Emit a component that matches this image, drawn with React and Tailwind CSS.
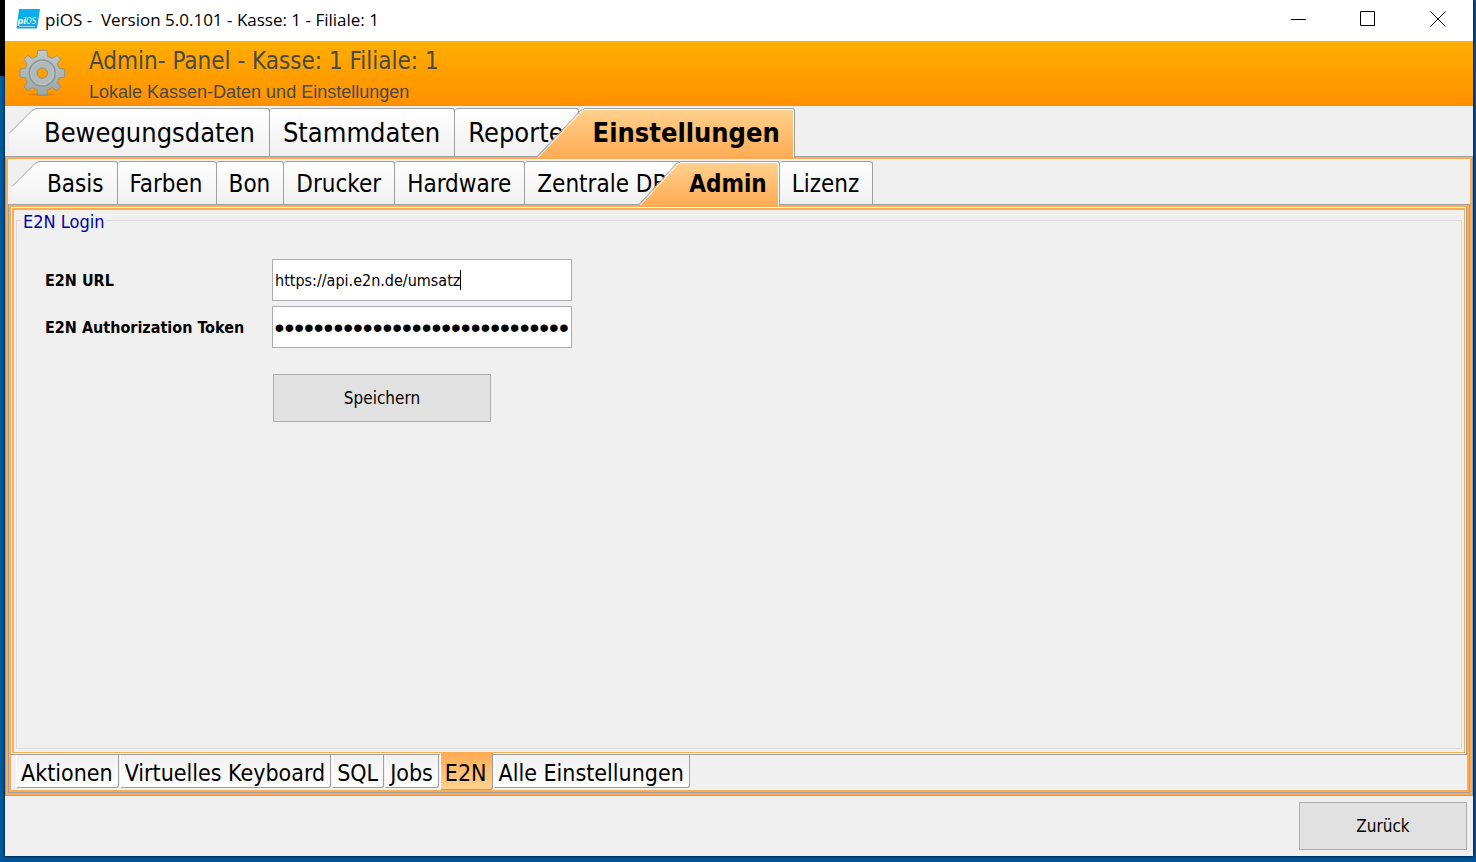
import { useState } from 'react';
import clsx from 'clsx';

const MAIN_TABS = ['Bewegungsdaten', 'Stammdaten', 'Reporte', 'Einstellungen'];
const SUB_TABS = ['Basis', 'Farben', 'Bon', 'Drucker', 'Hardware', 'Zentrale DB', 'Admin', 'Lizenz'];
const ADMIN_TABS = ['Aktionen', 'Virtuelles Keyboard', 'SQL', 'Jobs', 'E2N', 'Alle Einstellungen'];

function PiosLogo() {
  return (
    <svg viewBox="0 0 24 20" className="h-5 w-6" aria-hidden="true">
      <defs>
        <linearGradient id="logo" x1="0" y1="0" x2="0" y2="1">
          <stop offset="0" stopColor="#00b4f0" />
          <stop offset="1" stopColor="#1c9fe0" />
        </linearGradient>
      </defs>
      <path d="M3 0H24L21 19.5H0.5Z" fill="url(#logo)" />
      <path d="M3 17.5H19" stroke="#bfe8fa" strokeWidth="0.8" />
      <text x="1.5" y="15" fontSize="10" fontStyle="italic" fontFamily="DejaVu Sans Condensed, sans-serif" fill="#fff">
        <tspan fontWeight="700" fontSize="9">pi</tspan>
        <tspan fontSize="8">OS</tspan>
      </text>
    </svg>
  );
}

function GearIcon() {
  return (
    <svg viewBox="0 0 48 48" className="h-12 w-12" aria-hidden="true">
      <defs>
        <linearGradient id="gear" x1="0" y1="0" x2="0" y2="1">
          <stop offset="0" stopColor="#c3cac9" />
          <stop offset="1" stopColor="#9aa5a5" />
        </linearGradient>
      </defs>
      <ellipse cx="24" cy="45.5" rx="14" ry="1.5" fill="#a85f00" opacity="0.3" />
      <path
        d="M19.8 1.4H28.8L29.6 7.4Q32 8 34.2 9.6L38.8 6.4L42.6 10.2L39.4 15Q40.6 17 41.2 19.4L46.6 20.2V28L41.2 28.8Q40.6 31.2 39.4 33.2L42.6 38L38.8 41.8L34.2 38.6Q32 40 29.6 40.8L28.8 46H19.8L19 40.8Q16.6 40 14.4 38.6L9.8 41.8L6 38L9.2 33.2Q8 31.2 7.4 28.8L2 28V20.2L7.4 19.4Q8 17 9.2 15L6 10.2L9.8 6.4L14.4 9.6Q16.6 8 19 7.4Z"
        fill="url(#gear)"
        stroke="#828c8c"
        strokeWidth="0.8"
        strokeLinejoin="round"
      />
      <circle cx="24.3" cy="24" r="13" fill="#b0baba" stroke="#8b9696" strokeWidth="1.4" />
      <circle cx="24.3" cy="24" r="11.4" fill="none" stroke="#bcc5c5" strokeWidth="0.8" />
      <circle cx="24.3" cy="24" r="5.2" fill="#ff9f00" stroke="#838d8d" strokeWidth="1" />
    </svg>
  );
}

function WindowButton({ label, children }) {
  return (
    <button type="button" aria-label={label} className="flex h-[37px] w-[70px] items-center justify-center">
      <svg viewBox="0 0 16 16" className="h-4 w-4" fill="none" stroke="#000" aria-hidden="true">
        {children}
      </svg>
    </button>
  );
}

// slanted left edge of the first and of the selected tab
function Slant({ large, active }) {
  if (active) {
    return (
      <svg
        viewBox={large ? '0 0 48 50' : '0 0 42 45'}
        className={large ? 'h-[50px] w-[48px]' : 'h-[45px] w-[42px]'}
        aria-hidden="true"
      >
        <defs>
          <linearGradient id="orange" x1="0" y1="0" x2="0" y2="1">
            <stop offset="0" stopColor="#ffd18c" />
            <stop offset="1" stopColor="#ffab54" />
          </linearGradient>
        </defs>
        <path d={large ? 'M0 50V48.5L44 3L48 1V50Z' : 'M0 45V43.5L38 3L42 1V45Z'} fill="url(#orange)" />
        <path d={large ? 'M1.5 49L44.5 3.5L48 1.5' : 'M1.5 44L38.5 3.5L42 1.5'} fill="none" stroke="#fff" />
        <path d={large ? 'M0 48.5L43.5 2.5L48 0.5' : 'M0 43.5L37.5 2.5L42 0.5'} fill="none" stroke="#a0a0a0" />
      </svg>
    );
  }
  return (
    <svg
      viewBox={large ? '0 0 27 48' : '0 0 27 43'}
      className={large ? 'h-[48px] w-[27px]' : 'h-[43px] w-[27px]'}
      aria-hidden="true"
    >
      <defs>
        <linearGradient id="plain" x1="0" y1="0" x2="0" y2="1">
          <stop offset="0" stopColor="#fff" />
          <stop offset="1" stopColor="#f0f0f0" />
        </linearGradient>
      </defs>
      <path d={large ? 'M0 48V25.5L23 2.5L27 0.5V48Z' : 'M0 43V25.5L23 2.5L27 0.5V43Z'} fill="url(#plain)" />
      <path d="M0 25.5L23 2.5L27 0.5" fill="none" stroke="#a0a0a0" />
    </svg>
  );
}

function TopTabs({ tabs, selected, onSelect, large }) {
  return (
    <div role="tablist" className={clsx('flex items-start pl-1', large ? 'h-[48px] text-[27px]' : 'h-[43px] text-[24px]')}>
      {tabs.map((tab, i) => {
        const active = tab === selected;
        const slanted = active || i === 0;
        return (
          <button
            key={tab}
            type="button"
            role="tab"
            aria-selected={active}
            onClick={() => onSelect(tab)}
            className={clsx('flex', active && 'relative z-10 font-bold', active && i > 0 && '-ml-[42px]')}
          >
            {slanted && <Slant large={large} active={active} />}
            <span
              className={clsx(
                'flex items-center border-t border-r border-[#a0a0a0] whitespace-nowrap',
                large ? 'pr-3.5' : active ? 'pr-3' : 'pr-[13px]',
                slanted ? 'rounded-tr-[3px]' : 'rounded-t-[3px]',
                slanted ? 'pl-2' : large ? 'pl-[13px]' : 'pl-3',
                active
                  ? 'bg-linear-to-b from-[#ffd18c] to-[#ffab54] shadow-[inset_-1px_1px_#fff]'
                  : 'bg-linear-to-b from-white to-[#f0f0f0] pt-0.5',
                large ? (active ? 'h-[50px]' : 'h-[48px]') : active ? 'h-[45px]' : 'h-[43px]'
              )}
            >
              {tab}
            </span>
          </button>
        );
      })}
    </div>
  );
}

function BottomTabs({ tabs, selected, onSelect }) {
  return (
    <div role="tablist" className="flex h-[35px] items-start gap-px pl-[5px] text-[23px]">
      {tabs.map((tab) => {
        const active = tab === selected;
        return (
          <button
            key={tab}
            type="button"
            role="tab"
            aria-selected={active}
            onClick={() => onSelect(tab)}
            className={clsx(
              'flex items-center rounded-br-[3px] border-r border-b border-l border-[#a0a0a0] border-l-white pt-1 pr-[5px] pl-1 whitespace-nowrap',
              active
                ? 'relative z-10 -mt-0.5 h-[37px] bg-linear-to-t from-[#ffd18c] to-[#ffab54]'
                : 'h-[33px] bg-linear-to-t from-white to-[#f0f0f0]'
            )}
          >
            {tab}
          </button>
        );
      })}
    </div>
  );
}

function LoginForm() {
  const [url, setUrl] = useState('https://api.e2n.de/umsatz');
  const [token, setToken] = useState('0123456789abcdef0123456789abcdef');

  // keeps the end of a long token in view
  const scrollToEnd = (el) => {
    if (el) el.scrollLeft = el.scrollWidth;
  };

  return (
    <fieldset className="mx-0.5 mb-[3px] grow border border-[#dcdcdc] px-7 pt-[29px]">
      <legend className="-ml-6 px-0.5 pt-1 text-[18px] leading-4 text-[#0000a8]">E2N Login</legend>
      <form onSubmit={(e) => e.preventDefault()}>
        <div className="grid grid-cols-[227px_300px] items-center gap-y-[5px]">
          <label htmlFor="url" className="pt-0.5 text-[16px] font-bold">E2N URL</label>
          <div className="flex h-[42px] items-center border border-[#abadb3] bg-white px-0.5">
            <input
              id="url"
              type="text"
              value={url}
              onChange={(e) => setUrl(e.target.value)}
              className="field-sizing-content pt-0.5 text-[16px] outline-none"
            />
            <span className="h-5 w-px bg-black" />
          </div>
          <label htmlFor="token" className="pt-0.5 text-[16px] font-bold">E2N Authorization Token</label>
          <input
            id="token"
            type="password"
            ref={scrollToEnd}
            value={token}
            onChange={(e) => setToken(e.target.value)}
            className="h-[42px] border border-[#abadb3] bg-white px-0.5 pt-0.5 font-['Liberation_Sans',sans-serif] text-[28px] outline-none"
          />
        </div>
        <button type="submit" className="mt-[26px] ml-[228px] h-12 w-[218px] border border-[#adadad] bg-[#e1e1e1] pt-0.5 text-[17px]">
          Speichern
        </button>
      </form>
    </fieldset>
  );
}

export default function App() {
  const [mainTab, setMainTab] = useState('Einstellungen');
  const [subTab, setSubTab] = useState('Admin');
  const [adminTab, setAdminTab] = useState('E2N');

  return (
    <div className="flex min-h-screen flex-col bg-[#00549a] font-['DejaVu_Sans_Condensed','DejaVu_Sans',sans-serif] text-black">
      <div className="flex grow">
        <div className="w-[5px] bg-linear-to-b from-black from-[76px] to-[#005a9e] to-[76px]" />
        <div className="flex grow flex-col bg-[#f0f0f0] shadow-[0_0_3px_#000]">
          {/* Title bar */}
          <div className="flex h-[41px] items-start bg-white pl-[11px]">
            <div className="flex h-[37px] grow items-center gap-[5px]">
              <PiosLogo />
              <h1 className="pt-0.5 font-['Open_Sans',sans-serif] text-[17px] whitespace-pre">piOS -  Version 5.0.101 - Kasse: 1 - Filiale: 1</h1>
            </div>
            <WindowButton label="Minimieren">
              <path d="M1 8.5H16" />
            </WindowButton>
            <WindowButton label="Maximieren">
              <path d="M0.5 0.5H14.5V14.5H0.5Z" />
            </WindowButton>
            <WindowButton label="Schließen">
              <path d="M0.5 0.5L15.5 15.5M15.5 0.5L0.5 15.5" />
            </WindowButton>
          </div>

          {/* Header */}
          <header className="flex h-[65px] items-start bg-linear-to-b from-[#ffae00] to-[#ff9000] pt-2 pl-[13px] text-[#4a4a4a]">
            <GearIcon />
            <div className="ml-[23px]">
              <h2 className="text-[24px] leading-6">Admin- Panel - Kasse: 1 Filiale: 1</h2>
              <p className="mt-[7px] font-['Liberation_Sans',sans-serif] text-[18px] leading-6">Lokale Kassen-Daten und Einstellungen</p>
            </div>
          </header>

          <main className="flex grow flex-col pt-0.5">
            <TopTabs tabs={MAIN_TABS} selected={mainTab} onSelect={setMainTab} large />
            <div className="flex grow flex-col border border-[#a0a0a0]">
              <div className="flex grow flex-col border-2 border-[#ffab54] pt-0.5">
                <TopTabs tabs={SUB_TABS} selected={subTab} onSelect={setSubTab} />
                <div className="flex grow flex-col border border-[#a0a0a0]">
                  <div className="flex grow flex-col border-2 border-[#ffab54]">
                    <div className="flex grow flex-col border-r border-b border-[#a0a0a0]">
                      <div className="flex grow flex-col border border-white">
                        <div className="flex grow flex-col border border-t-2 border-l-2 border-[#ffab54]">
                          <LoginForm />
                        </div>
                      </div>
                    </div>
                    <BottomTabs tabs={ADMIN_TABS} selected={adminTab} onSelect={setAdminTab} />
                  </div>
                </div>
              </div>
            </div>
          </main>

          <footer className="flex justify-end p-1.5">
            <button type="button" className="h-12 w-[168px] border border-[#adadad] bg-[#e1e1e1] pt-0.5 text-[17px]">
              Zurück
            </button>
          </footer>
        </div>
        <div className="w-[3px]" />
      </div>
      <div className="h-1.5" />
    </div>
  );
}
